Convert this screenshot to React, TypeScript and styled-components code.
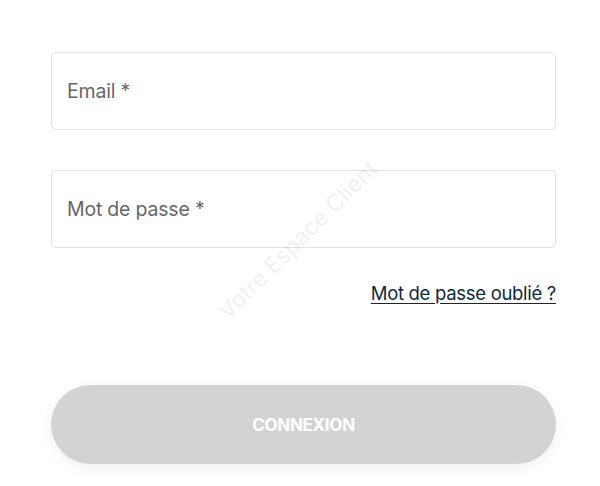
import styled, { createGlobalStyle } from "styled-components";

const GlobalStyle = createGlobalStyle`
  body {
    margin: 0;
    background: #fff;
    font-family: "Inter", "Noto Sans", sans-serif;
  }
`;

export default function App() {
  return (
    <>
      <GlobalStyle />
      <Page>
        <Watermark>Votre Espace Client</Watermark>
        <Form>
          <Field>
            <Placeholder>Email *</Placeholder>
          </Field>
          <Field>
            <Placeholder>Mot de passe *</Placeholder>
          </Field>
          <LinkRow>
            <ForgotLink href="#">Mot de passe oublié ?</ForgotLink>
          </LinkRow>
          <SubmitButton type="button" disabled>
            CONNEXION
          </SubmitButton>
        </Form>
      </Page>
    </>
  );
}

const Page = styled.div`
  position: relative;
  width: 600px;
  height: 486px;
  padding: 52px 45px 0 51px;
  box-sizing: border-box;
  overflow: hidden;
`;

const Form = styled.div`
  display: flex;
  flex-direction: column;
  width: 505px;
`;

const Field = styled.div`
  display: flex;
  align-items: center;
  height: 78px;
  padding: 0 15px;
  box-sizing: border-box;
  border: 1px solid #e2e2e2;
  border-radius: 5px;
  margin-bottom: 40px;

  &:nth-of-type(2) {
    margin-bottom: 34px;
  }
`;

const Placeholder = styled.span`
  font-size: 19.5px;
  color: #666;
  letter-spacing: -0.2px;
`;

const LinkRow = styled.div`
  display: flex;
  justify-content: flex-end;
  margin-bottom: 81px;
`;

const ForgotLink = styled.a`
  font-size: 18.5px;
  color: #0e2a3b;
  text-decoration: underline;
  text-underline-offset: 3px;
  letter-spacing: -0.3px;
`;

const SubmitButton = styled.button`
  height: 79px;
  border: none;
  border-radius: 40px;
  background: #d3d3d3;
  color: #fff;
  font-family: inherit;
  font-size: 17px;
  font-weight: 700;
  letter-spacing: -0.3px;
  box-shadow: 0 4px 14px rgba(0, 0, 0, 0.06);
  cursor: default;
`;

const Watermark = styled.div`
  position: absolute;
  left: 298px;
  top: 240px;
  transform: translate(-50%, -50%) rotate(-45deg);
  font-size: 23px;
  color: rgba(0, 0, 0, 0.07);
  white-space: nowrap;
  pointer-events: none;
`;
